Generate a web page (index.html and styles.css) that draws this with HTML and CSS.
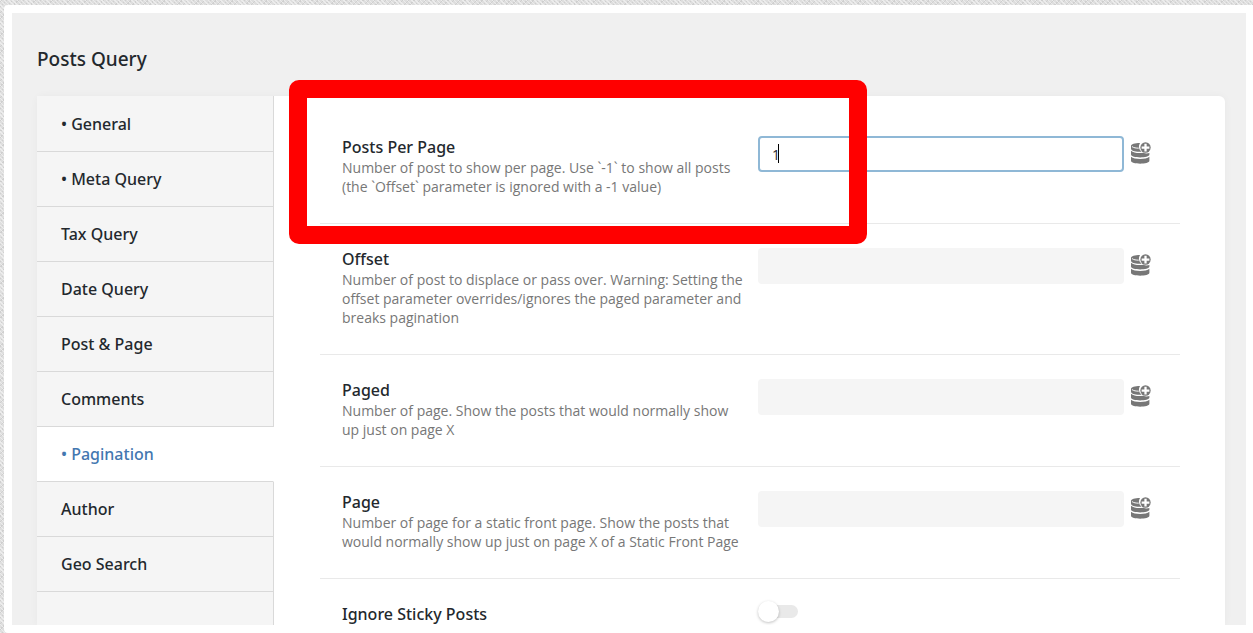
FILE: index.html
```html
<!DOCTYPE html>
<html lang="en">
<head>
<meta charset="utf-8">
<title>Posts Query</title>
<link rel="stylesheet" href="styles.css">
</head>
<body>
<svg class="defs" aria-hidden="true">
  <symbol id="db-add" viewBox="0 0 62 68">
    <path fill="#777" d="M0 12C0 7 12 3 28 3C25 8 24 13 25 18C26 23 29 27 33 30C15 32 0 27 0 21Z"/>
    <path fill="#777" d="M0 27C8 34 25 36 38 33C44 36 51 36 57 34V39C57 51 0 51 0 39Z"/>
    <path fill="#777" d="M0 46C10 55 47 55 57 46V58C57 70 0 70 0 58Z"/>
    <path fill="none" stroke="#fff" stroke-width="3" d="M3 14C8 18 16 19 24 19"/>
    <circle cx="45" cy="17" r="16" fill="#777"/>
    <path fill="none" stroke="#fff" stroke-width="7" d="M45 5V29M33 17H57"/>
  </symbol>
</svg>
<div class="frame">
  <main class="screen">
    <h1 class="title">Posts Query</h1>
    <div class="panel">
      <nav class="tabs">
        <a class="tab" href="#general">• General</a>
        <a class="tab" href="#meta">• Meta Query</a>
        <a class="tab" href="#tax">Tax Query</a>
        <a class="tab" href="#date">Date Query</a>
        <a class="tab" href="#post">Post &amp; Page</a>
        <a class="tab" href="#comments">Comments</a>
        <a class="tab active" href="#pagination">• Pagination</a>
        <a class="tab" href="#author">Author</a>
        <a class="tab" href="#geo">Geo Search</a>
        <div class="tabs-rest"></div>
      </nav>
      <form class="fields">
        <div class="row">
          <div class="info">
            <label class="name" for="ppp">Posts Per Page</label>
            <p class="desc">Number of post to show per page. Use `-1` to show all posts (the `Offset` parameter is ignored with a -1 value)</p>
          </div>
          <div class="control"><input class="text focused" id="ppp" type="text" value="1"><span class="caret"></span></div>
          <button class="dynamic" type="button" aria-label="Dynamic value"><svg class="icon"><use href="#db-add"/></svg></button>
        </div>
        <div class="row">
          <div class="info">
            <label class="name" for="offset">Offset</label>
            <p class="desc">Number of post to displace or pass over. Warning: Setting the offset parameter overrides/ignores the paged parameter and breaks pagination</p>
          </div>
          <div class="control"><input class="text" id="offset" type="text"></div>
          <button class="dynamic" type="button" aria-label="Dynamic value"><svg class="icon"><use href="#db-add"/></svg></button>
        </div>
        <div class="row">
          <div class="info">
            <label class="name" for="paged">Paged</label>
            <p class="desc">Number of page. Show the posts that would normally show up just on page X</p>
          </div>
          <div class="control"><input class="text" id="paged" type="text"></div>
          <button class="dynamic" type="button" aria-label="Dynamic value"><svg class="icon"><use href="#db-add"/></svg></button>
        </div>
        <div class="row">
          <div class="info">
            <label class="name" for="page">Page</label>
            <p class="desc">Number of page for a static front page. Show the posts that would normally show up just on page X of a Static Front Page</p>
          </div>
          <div class="control"><input class="text" id="page" type="text"></div>
          <button class="dynamic" type="button" aria-label="Dynamic value"><svg class="icon"><use href="#db-add"/></svg></button>
        </div>
        <div class="row">
          <div class="info"><label class="name" for="sticky">Ignore Sticky Posts</label></div>
          <div class="control"><input class="toggle" id="sticky" type="checkbox"></div>
        </div>
      </form>
    </div>
  </main>
</div>
<div class="highlight"></div>
</body>
</html>
```
FILE: styles.css
```css
* { box-sizing: border-box; }

body {
  margin: 0;
  height: 100vh;
  padding: 5px 0 0 4px;
  overflow: hidden;
  font-family: "Open Sans", "Noto Sans", sans-serif;
  color: #23282d;
  background-color: #dedede;
  background-image:
    repeating-linear-gradient(45deg, #ececec 0 1px, transparent 1px 3px),
    repeating-linear-gradient(-45deg, #cfcfcf 0 1px, transparent 1px 4px);
}

.defs { position: absolute; width: 0; height: 0; }

.frame {
  height: 100%;
  padding: 8px 7px 8px 8px;
  background: #fff;
  border-radius: 4px 0 0 4px;
}

.screen {
  display: flex;
  flex-direction: column;
  height: 100%;
  padding: 32px 21px 0 25px;
  overflow: hidden;
  background: #f0f0f0;
}

.title,
.tab,
.name {
  font-family: "Noto Sans", "Open Sans", sans-serif;
  font-weight: 500;
}

.title {
  margin: 0 0 23px;
  font-size: 19px;
  line-height: 28px;
}

.panel {
  display: flex;
  flex: 1;
  min-height: 0;
  background: #fff;
  border-radius: 6px 6px 0 0;
  box-shadow: 0 0 8px rgba(0, 0, 0, 0.04);
}

.tabs {
  display: flex;
  flex: 0 0 237px;
  flex-direction: column;
}

.tab {
  padding-left: 24px;
  border-right: 1px solid #d9d9d9;
  border-bottom: 1px solid #d9d9d9;
  background: #f5f5f5;
  color: #23282d;
  font-size: 16px;
  line-height: 54px;
  text-decoration: none;
}

.tab:first-child { padding-top: 1px; }

.tab.active {
  border-right-color: #fff;
  background: #fff;
  color: #4377b0;
}

.tabs-rest {
  flex: 1;
  border-right: 1px solid #d9d9d9;
  background: #f5f5f5;
}

.fields {
  flex: 1;
  padding: 16px 45px 0 46px;
}

.row {
  display: grid;
  grid-template-columns: 406px 1fr 20px;
  align-items: start;
  padding: 24px 29px 27px 22px;
  border-bottom: 1px solid #e9e9e9;
}

.name {
  display: block;
  font-size: 16px;
  line-height: 22px;
}

.desc {
  margin: 0;
  color: #777;
  font-size: 14px;
  line-height: 19px;
}

.control { position: relative; padding: 0 7px 0 10px; }

.text {
  display: block;
  width: 100%;
  height: 36px;
  padding: 0 12px;
  border: 2px solid #f5f5f5;
  border-radius: 4px;
  outline: none;
  background: #f5f5f5;
  color: #23282d;
  font: 14px "Open Sans", "Noto Sans", sans-serif;
}

.text.focused { border-color: #8fb8d6; background: #fff; }

.caret {
  position: absolute;
  top: 8px;
  left: 30px;
  width: 1px;
  height: 19px;
  background: #000;
}

.dynamic {
  padding: 6px 0 0;
  border: 0;
  background: none;
}

.icon { display: block; width: 20px; height: 22px; }

.toggle {
  display: block;
  position: relative;
  width: 38px;
  height: 13px;
  margin: 2px;
  appearance: none;
  border-radius: 7px;
  background: #e9e9e9;
}

.toggle::before {
  content: "";
  position: absolute;
  top: -4px;
  left: -2px;
  width: 21px;
  height: 21px;
  border-radius: 50%;
  background: #fff;
  box-shadow: 0 1px 3px rgba(0, 0, 0, 0.25);
}

.highlight {
  position: absolute;
  top: 80px;
  left: 289px;
  width: 578px;
  height: 164px;
  border: 18px solid #f00;
  border-radius: 10px;
}
```
